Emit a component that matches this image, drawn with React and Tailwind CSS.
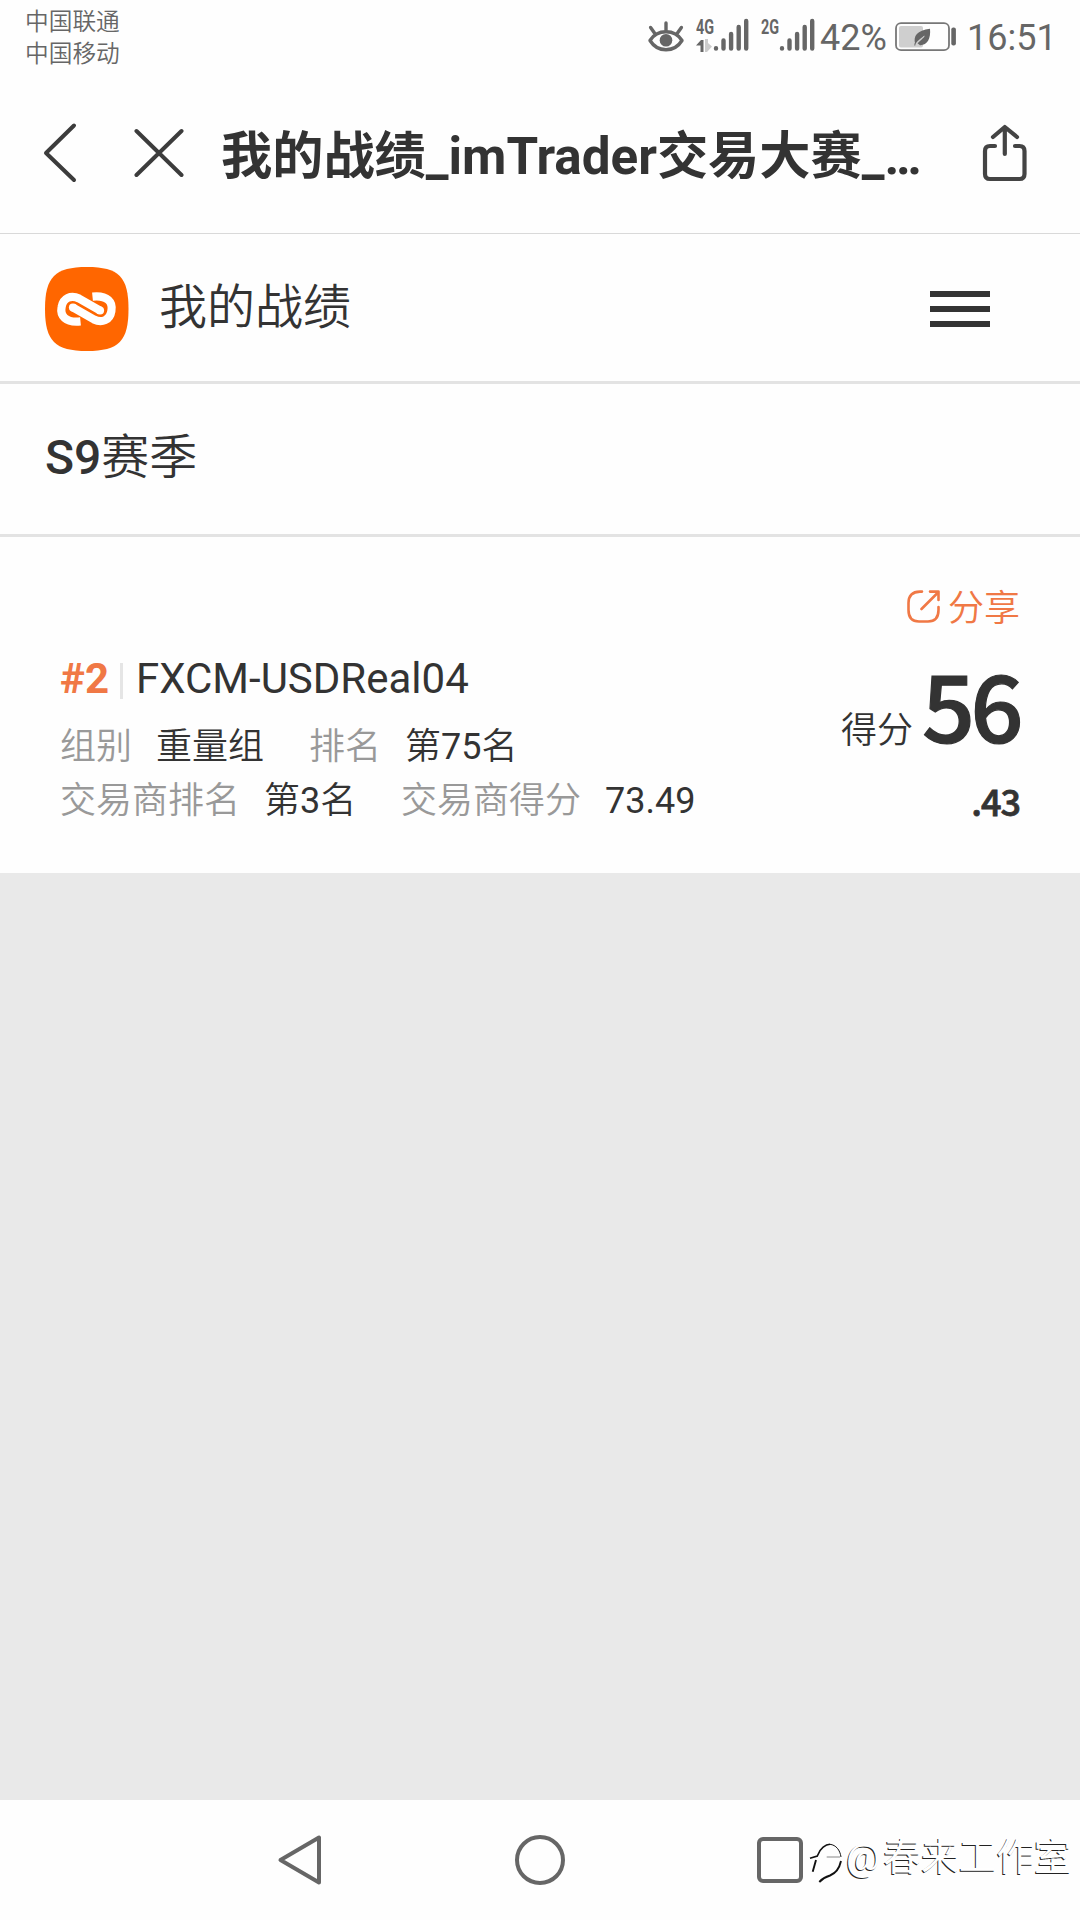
import React from "react";

function SignalBars() {
  return (
    <svg className="block h-[34px] w-[36px]" viewBox="0 0 36 34" stroke="#666" strokeWidth="4.4" strokeLinecap="round">
      <path d="M3 30.2V30.6M10.5 22.5V30.6M18.1 16V30.6M25.7 9V30.6M33.2 3V30.6" />
    </svg>
  );
}

function EyeIcon() {
  return (
    <svg className="block h-[34px] w-[36px]" viewBox="0 0 36 34" fill="none" stroke="#666" strokeWidth="3.4" strokeLinecap="round">
      <path d="M2 21.5C6 15 12 12.8 18 12.8S30 15 34 21.5C30 28 24 30.7 18 30.7S6 28 2 21.5Z" strokeLinejoin="round" />
      <path d="M18 11V4M6.5 14L2.6 8.5M29.5 14L33.4 8.5" />
      <circle cx="18" cy="21.3" r="6.3" fill="#666" stroke="none" />
    </svg>
  );
}

function BatteryIcon() {
  return (
    <svg className="block h-[30px] w-[62px]" viewBox="0 0 62 30" fill="none">
      <rect x="1" y="1.2" width="53" height="27" rx="5" stroke="#777" strokeWidth="1.8" />
      <rect x="4" y="4" width="24" height="21.5" rx="2" fill="#cfcfcf" />
      <path d="M35 6.800C36 17 32 23.500 25 23.200L22.500 21.200C26 18 29 15.500 30 13.500C27 15.500 23 18 20.200 22C18 14 22 8.500 35 6.800Z" fill="#666" />
      <path d="M20.200 21L19.800 23.500" stroke="#666" />
      <rect x="56.300" y="5.500" width="4.600" height="18" rx="2" fill="#666" />
    </svg>
  );
}

function StatusBar() {
  return (
    <div className="flex h-[76px] justify-between text-[#666]">
      <div className="mt-[6px] ml-[25px] text-[23.700px] leading-[32px] font-[350]">
        <div>中国联通</div>
        <div>中国移动</div>
      </div>
      <div className="mr-[27px] flex items-start">
        <div className="mt-[19px]"><EyeIcon /></div>
        <div className="mt-[18px] ml-[12px] w-[20px]">
          <div className="origin-left scale-x-[0.72] text-[20px] leading-[19px] font-bold">4G</div>
          <svg className="mt-[2px] block h-[13px] w-[18px]" viewBox="0 0 18 13">
            <path d="M0 6.500L5 1H7.500V13H4.500V6.500Z" fill="#666" />
            <path d="M9 0H12V4L16 7.500L11 13H9Z" fill="#ccc" />
          </svg>
        </div>
        <div className="mt-[18px] -ml-[3px]"><SignalBars /></div>
        <div className="mt-[18px] ml-[12px] w-[20px]">
          <div className="origin-left scale-x-[0.72] text-[20px] leading-[19px] font-bold">2G</div>
        </div>
        <div className="mt-[18px] -ml-[2px]"><SignalBars /></div>
        <div className="mt-[17px] ml-[5px] w-[66px] text-[36px] leading-[42px]">42%</div>
        <div className="mt-[22px] ml-[9px]"><BatteryIcon /></div>
        <div className="mt-[17px] ml-[10px] w-[86px] text-[36px] leading-[42px]">16:51</div>
      </div>
    </div>
  );
}

function TitleBar() {
  return (
    <div className="flex h-[158px] items-start border-b border-[#d9d9d9] text-[#333]">
      <svg className="mt-[46px] ml-[43px] block h-[62px] w-[36px]" viewBox="0 0 36 62" fill="none" stroke="#3c3c3c" strokeWidth="4" strokeLinecap="round" strokeLinejoin="round">
        <path d="M31 3.500L3 31L31 58" />
      </svg>
      <svg className="mt-[51px] ml-[53px] block h-[52px] w-[52px]" viewBox="0 0 52 52" stroke="#3c3c3c" strokeWidth="4" strokeLinecap="round">
        <path d="M4.500 4L49.500 48M49.500 4L4.500 48" />
      </svg>
      <h1 className="mt-[46px] ml-[37px] w-[721px] text-[51.200px] leading-[70px] font-bold whitespace-nowrap">
        我的战绩_imTrader交易大赛_<span className="tracking-[-3.400px]">...</span>
      </h1>
      <svg className="mt-[47px] ml-[40px] block h-[60px] w-[46px]" viewBox="0 0 46 60" fill="none" stroke="#444" strokeWidth="4.200" strokeLinecap="round" strokeLinejoin="round">
        <path d="M13 23H8Q3 23 3 28V51Q3 56 8 56H37.500Q42.500 56 42.500 51V28Q42.500 23 37.500 23H33M22.800 31V4M11 14L22.800 4L35 14" />
      </svg>
    </div>
  );
}

function PageHeader() {
  return (
    <header className="flex h-[150px] items-start border-b-[3px] border-[#e3e3e3]">
      <svg className="mt-[33px] ml-[45px] block size-[84px]" viewBox="0 0 84 84" fill="none">
        <path d="M0 42C0 10 10 0 42 0S83.500 10 83.500 42S74 84 42 84S0 74 0 42Z" fill="#ff6600" />
        <path d="M35.500 54.400C20 56 15 48.500 16.600 40C18 31 26 27.500 34 31.500L55 43.500M47.500 29.600C63 28 68 35.500 66.400 44C65 53 57 56.500 49 52.500L28 40.500" stroke="#fff" strokeWidth="8.200" />
        <circle cx="55" cy="43.500" r="4.100" fill="#fff" />
        <circle cx="28" cy="40.500" r="4.100" fill="#fff" />
      </svg>
      <div className="mt-[39px] ml-[30px] text-[48px] leading-[70px] font-[350] text-[#333]">我的战绩</div>
      <div className="mt-[57px] mr-[90px] ml-auto flex w-[60px] flex-col gap-[9px]">
        <div className="h-[6px] bg-[#333]" />
        <div className="h-[6px] bg-[#333]" />
        <div className="h-[6px] bg-[#333]" />
      </div>
    </header>
  );
}

function ScoreCard() {
  return (
    <section className="flex h-[336px] justify-between text-[#333]">
      <div className="mt-[112px] ml-[60px]">
        <div className="flex h-[60px] items-center text-[42px] leading-[60px]">
          <span className="font-bold text-[#f07845]">#2</span>
          <span className="mt-[3px] ml-[11px] h-[36px] w-[3px] bg-[#e5e5e5]" />
          <span className="ml-[13px]">FXCM-USDReal04</span>
        </div>
        <div className="mt-[11px] flex text-[36px] leading-[54px] font-[350]">
          <span className="w-[96px] text-[#999]">组别</span>
          <span className="w-[153px]">重量组</span>
          <span className="w-[96px] text-[#999]">排名</span>
          <span>第<span className="font-normal">75</span>名</span>
        </div>
        <div className="flex text-[36px] leading-[54px] font-[350]">
          <span className="w-[204px] text-[#999]">交易商排名</span>
          <span className="w-[137px]">第<span className="font-normal">3</span>名</span>
          <span className="w-[204px] text-[#999]">交易商得分</span>
          <span className="font-normal">73.49</span>
        </div>
      </div>
      <div className="mt-[45px] mr-[60px] flex flex-col items-end">
        <div className="flex h-[54px] items-center text-[36px] leading-[54px] font-[350] text-[#f07845]">
          <svg className="-mt-[6px] mr-[8px] block size-[33px]" viewBox="0 0 33 33" fill="none" stroke="#f07845" strokeWidth="2.600" strokeLinecap="round" strokeLinejoin="round">
            <path d="M15 1.600H13C5 1.600 1.500 6 1.500 13V20C1.500 28 5 31.500 12 31.500H21C28 31.500 31.500 28 31.500 20V17M14.500 19L31.500 2M23 1.600H31.500V10" />
          </svg>
          分享
        </div>
        <div className="mt-[12px] flex h-[110px] items-baseline leading-[110px]">
          <span className="text-[36px] font-[350]">得分</span>
          <span className="mr-[1px] ml-[9px] font-['Noto_Sans_CJK_SC'] text-[93px] font-medium tracking-[-4.500px] [-webkit-text-stroke:1.2px_#333]">56</span>
        </div>
        <div className="mt-[15px] font-['Noto_Sans_CJK_SC'] text-[36px] leading-[54px] font-medium tracking-[-1px] [-webkit-text-stroke:0.8px_#333]">.43</div>
      </div>
    </section>
  );
}

function NavBar() {
  return (
    <nav className="relative flex h-[120px] items-start pt-[33px]">
      <svg className="ml-[277px] block h-[54px] w-[46px]" viewBox="0 0 46 54" fill="none" stroke="#666" strokeWidth="4" strokeLinejoin="round">
        <path d="M42 4.500V49.500L3.500 27Z" />
      </svg>
      <div className="mt-[2px] ml-[192px] size-[50px] rounded-full border-[4px] border-[#666]" />
      <div className="mt-[4px] ml-[192px] size-[46px] rounded-[6px] border-[4px] border-[#666]" />
      <div className="absolute top-[31px] left-[808px] flex items-start">
        <svg className="mt-[8px] block h-[46px] w-[38px]" viewBox="0 0 38 46" fill="none" stroke="#111">
          <path d="M2 19.300L9.300 17C12 9 18 5.500 22 5.300" strokeWidth="1.600" />
          <path d="M22 5.300C28 6 32 11 33 18" strokeWidth="1" />
          <path d="M8 21L4.700 32.700M33 22C31 31 27 34.500 22 36.500C17 38 14 40 11.300 43" strokeWidth="1.900" />
          <path d="M18.700 18H32" stroke="#888" strokeWidth="1" />
        </svg>
        <span className="text-[37.700px] leading-[52px] whitespace-nowrap text-white [text-shadow:-1px_1px_0_#222]">
          <span className="tracking-[3.500px]">@</span>春来工作室
        </span>
      </div>
    </nav>
  );
}

export default function App() {
  return (
    <div className="flex h-[1920px] w-[1080px] flex-col overflow-hidden bg-[#fefefe] font-['Roboto','Noto_Sans_CJK_SC',sans-serif]">
      <StatusBar />
      <TitleBar />
      <PageHeader />
      <div className="flex h-[153px] items-start border-b-[3px] border-[#e3e3e3] pt-[39px] pl-[45px] text-[48px] leading-[70px] text-[#333]">
        <span className="font-medium">S9</span>
        <span className="font-[350]">赛季</span>
      </div>
      <ScoreCard />
      <main className="h-[927px] bg-[#e9e9e9]" />
      <NavBar />
    </div>
  );
}
